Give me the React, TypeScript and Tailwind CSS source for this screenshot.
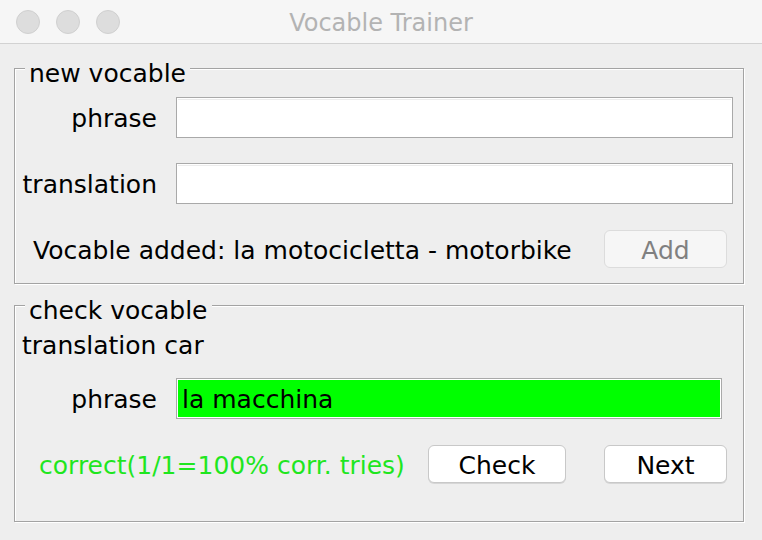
import React from "react";

const font = { fontFamily: '"DejaVu Sans", Verdana, sans-serif' };

function Legend({ children }: { children: React.ReactNode }) {
  return (
    <span className="absolute left-[10px] top-[-8px] bg-[#eeeeee] px-[4px] text-[25px] leading-[25px] text-black">
      {children}
    </span>
  );
}

function TextField({ value, green }: { value?: string; green?: boolean }) {
  return (
    <div className="flex-1 h-[41px] border border-[#a9a9a9] bg-white p-[1px]">
      <div
        className={
          "h-full w-full flex items-center pl-[4px] pt-[3px] text-[25px] text-black " +
          (green ? "bg-[#00ff00]" : "bg-white shadow-[inset_0_1px_0_#ececec]")
        }
      >
        {value}
      </div>
    </div>
  );
}

export default function App() {
  return (
    <div className="w-[762px] h-[540px] bg-[#eeeeee] overflow-hidden" style={font}>
      {/* title bar */}
      <div className="relative h-[44px] bg-[#f6f6f6] border-b border-[#d2d2d2] flex items-center">
        <div className="flex gap-[16px] pl-[16px]">
          <div className="w-[24px] h-[24px] rounded-full bg-[#dddddd] border border-[#d0d0d0]" />
          <div className="w-[24px] h-[24px] rounded-full bg-[#dddddd] border border-[#d0d0d0]" />
          <div className="w-[24px] h-[24px] rounded-full bg-[#dddddd] border border-[#d0d0d0]" />
        </div>
        <div className="absolute inset-0 flex items-center justify-center pt-[2px] text-[24px] text-[#b3b3b3]">
          Vocable Trainer
        </div>
      </div>

      {/* body */}
      <div className="pl-[14px] pr-[18px] pt-[24px]">
        {/* new vocable */}
        <div className="relative h-[216px] border border-[#a3a3a3] shadow-[inset_1px_1px_0_#ffffff,1px_1px_0_#ffffff] flex flex-col pt-[28px]">
          <Legend>new vocable</Legend>
          <div className="flex items-center pl-[7px] pr-[10px]">
            <div className="w-[135px] pt-[3px] text-right text-[25px] text-black">phrase</div>
            <div className="w-[19px]" />
            <TextField />
          </div>
          <div className="flex items-center pl-[7px] pr-[10px] mt-[25px]">
            <div className="w-[135px] pt-[3px] text-right text-[25px] text-black">translation</div>
            <div className="w-[19px]" />
            <TextField />
          </div>
          <div className="flex items-center pl-[18px] pr-[16px] mt-[25px]">
            <div className="pt-[3px] text-[25px] text-black whitespace-nowrap">
              Vocable added: la motocicletta - motorbike
            </div>
            <div className="ml-auto w-[123px] h-[38px] pt-[3px] rounded-[6px] bg-[#f6f6f6] border border-[#dcdcdc] flex items-center justify-center text-[25px] text-[#808080]">
              Add
            </div>
          </div>
        </div>

        {/* check vocable */}
        <div className="relative mt-[21px] h-[217px] border border-[#a3a3a3] shadow-[inset_1px_1px_0_#ffffff,1px_1px_0_#ffffff] flex flex-col pt-[25px]">
          <Legend>check vocable</Legend>
          <div className="pl-[7px] text-[25px] leading-[29px] text-black">translation car</div>
          <div className="flex items-center pl-[7px] pr-[21px] mt-[18px]">
            <div className="w-[135px] pt-[3px] text-right text-[25px] text-black">phrase</div>
            <div className="w-[19px]" />
            <TextField value="la macchina" green />
          </div>
          <div className="flex items-center pl-[24px] pr-[16px] mt-[25px]">
            <div className="pt-[3px] text-[25px] text-[#1fe61f] whitespace-nowrap">
              correct(1/1=100% corr. tries)
            </div>
            <div className="ml-auto w-[138px] h-[38px] pt-[3px] rounded-[6px] bg-white border border-[#c8c8c8] shadow-[0_1px_0_#d6d6d6] flex items-center justify-center text-[25px] text-black">
              Check
            </div>
            <div className="ml-[38px] w-[123px] h-[38px] pt-[3px] rounded-[6px] bg-white border border-[#c8c8c8] shadow-[0_1px_0_#d6d6d6] flex items-center justify-center text-[25px] text-black">
              Next
            </div>
          </div>
        </div>
      </div>
    </div>
  );
}
